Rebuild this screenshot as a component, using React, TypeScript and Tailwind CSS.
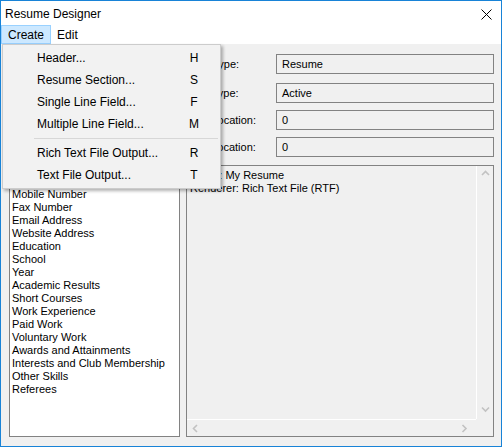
import React from "react";

const menuItems = [
  { label: "Header...", key: "H" },
  { label: "Resume Section...", key: "S" },
  { label: "Single Line Field...", key: "F" },
  { label: "Multiple Line Field...", key: "M" },
  null,
  { label: "Rich Text File Output...", key: "R" },
  { label: "Text File Output...", key: "T" },
];

const listItems = [
  "My Resume",
  "Header",
  "Personal Details",
  "Name",
  "Address",
  "Street",
  "City",
  "Post Code",
  "Country",
  "Phone Number",
  "Mobile Number",
  "Fax Number",
  "Email Address",
  "Website Address",
  "Education",
  "School",
  "Year",
  "Academic Results",
  "Short Courses",
  "Work Experience",
  "Paid Work",
  "Voluntary Work",
  "Awards and Attainments",
  "Interests and Club Membership",
  "Other Skills",
  "Referees",
];

// labels sit mostly under the open menu, only their tails show
const fields = [
  { label: "Item Type:", value: "Resume", mt: "mt-0", pl: "pl-[2px]" },
  { label: "Line Type:", value: "Active", mt: "mt-[9px]", pl: "pl-[2px]" },
  { label: "X Location:", value: "0", mt: "mt-[7px]", pl: "pl-[15px]" },
  { label: "Y Location:", value: "0", mt: "mt-[7px]", pl: "pl-[15px]" },
];

const Chevron = ({ dir }: { dir: "up" | "down" | "left" | "right" }) => {
  const d = {
    up: "M1 5 L4.5 1.5 L8 5",
    down: "M1 1.5 L4.5 5 L8 1.5",
    left: "M5 1 L1.5 4.5 L5 8",
    right: "M1.5 1 L5 4.5 L1.5 8",
  }[dir];
  const vertical = dir === "up" || dir === "down";
  return (
    <svg
      width={vertical ? 9 : 7}
      height={vertical ? 7 : 9}
      viewBox={vertical ? "0 0 9 7" : "0 0 7 9"}
    >
      <path d={d} fill="none" stroke="#c2c2c2" strokeWidth="1.6" />
    </svg>
  );
};

export default function App() {
  return (
    <div
      className="relative flex h-[447px] w-[502px] flex-col overflow-hidden border border-[#1883d7] bg-[#f0f0f0] text-black"
      style={{ fontFamily: '"Liberation Sans", Arial, sans-serif' }}
    >
      {/* title bar */}
      <div className="flex h-[24px] items-center justify-between bg-white pl-[4px] pr-[9px] text-[12px]">
        <span className="pt-[2px]">Resume Designer</span>
        <svg width="11" height="11" viewBox="0 0 11 11" className="mt-[2px]">
          <path d="M0.5 0.5 L10.5 10.5 M10.5 0.5 L0.5 10.5" stroke="#000" strokeWidth="1" />
        </svg>
      </div>

      {/* menu bar */}
      <div className="flex h-[19px] items-stretch bg-white text-[12px]">
        <div className="flex items-center border border-[#99d1ff] bg-[#cce8ff] px-[6px]">Create</div>
        <div className="flex items-center px-[6px]">Edit</div>
      </div>

      {/* content */}
      <div className="flex flex-1 gap-[6px] pl-[8px] pr-[7px] pt-[10px] pb-[9px] text-[11px]">
        <div className="w-[171px] overflow-hidden border border-[#828282] bg-white pl-[2px] pt-[3px] leading-[13px]">
          {listItems.map((item) => (
            <div key={item} className="whitespace-nowrap">
              {item}
            </div>
          ))}
        </div>

        <div className="flex flex-1 flex-col">
          {fields.map((f) => (
            <div key={f.label} className={`flex h-[20px] items-center ${f.mt}`}>
              <span className={`w-[90px] whitespace-nowrap ${f.pl}`}>{f.label}</span>
              <div className="flex h-full flex-1 items-center border border-[#828282] bg-[#f0f0f0] pl-[5px]">
                {f.value}
              </div>
            </div>
          ))}

          <div className="mt-[8px] flex flex-1 flex-col border border-[#828282] bg-[#f0f0f0]">
            <div className="flex flex-1">
              <div className="flex-1 pl-[3px] pt-[3px] leading-[13px]">
                <div>Name: My Resume</div>
                <div>Renderer: Rich Text File (RTF)</div>
              </div>
              <div className="flex w-[17px] flex-col items-center justify-between border-l border-white pt-[4px] pb-[6px]">
                <Chevron dir="up" />
                <Chevron dir="down" />
              </div>
            </div>
            <div className="flex h-[17px]">
              <div className="flex flex-1 items-center justify-between border-t border-white pl-[5px] pr-[8px]">
                <Chevron dir="left" />
                <Chevron dir="right" />
              </div>
              <div className="w-[17px]" />
            </div>
          </div>
        </div>
      </div>

      {/* open Create menu */}
      <div className="absolute left-[1px] top-[43px] w-[219px] border border-[#cccccc] bg-[#f2f2f2] py-[2px] text-[12px] shadow-[2px_2px_3px_rgba(0,0,0,0.3)]">
        {menuItems.map((m, i) =>
          m ? (
            <div key={m.label} className="flex h-[22px] items-center">
              <span className="flex-1 pl-[34px]">{m.label}</span>
              <span className="mr-[18px] w-[16px] text-center">{m.key}</span>
            </div>
          ) : (
            <div key={i} className="flex h-[7px] items-center pl-[31px] pr-[2px]">
              <div className="h-px flex-1 bg-[#d7d7d7]" />
            </div>
          )
        )}
      </div>
    </div>
  );
}
